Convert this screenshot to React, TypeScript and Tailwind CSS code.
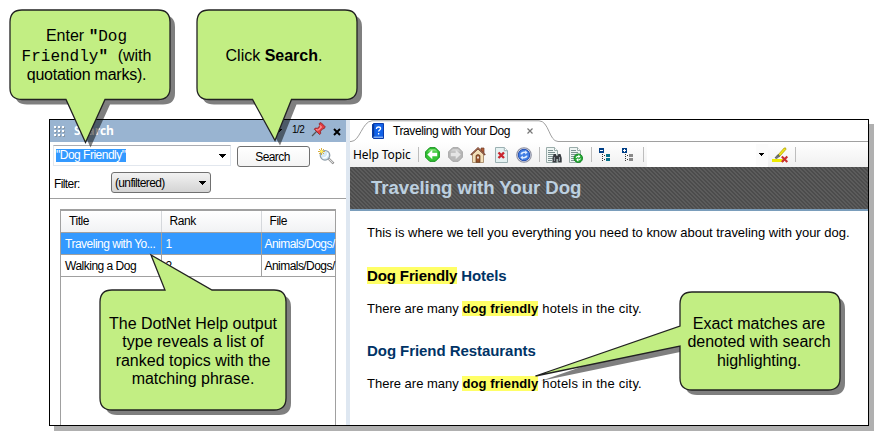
import React from "react";

const ui = "font-['Liberation_Sans',Arial,sans-serif]";

function Divider() {
  return <span className="h-[15px] w-px shrink-0 bg-[#bdbdbd]" />;
}

function Caret({ className = "" }: { className?: string }) {
  return (
    <svg className={className} width="7" height="4" viewBox="0 0 7 4" shapeRendering="crispEdges">
      <path d="M0 0h7v1H0zM1 1h5v1H1zM2 2h3v1H2zM3 3h1v1H3z" fill="#000" />
    </svg>
  );
}

function SmallCaret() {
  return (
    <svg width="5" height="3" viewBox="0 0 5 3" shapeRendering="crispEdges">
      <path d="M0 0h5v1H0zM1 1h3v1H1zM2 2h1v1H2z" fill="#000" />
    </svg>
  );
}

function PushPin() {
  return (
    <svg width="15" height="15" viewBox="0 0 15 15">
      <path d="M1 14 6 9" stroke="#555" strokeWidth="1.3" />
      <path d="M8.2 1.4 10 .6l4.2 4.2-1 1.8-1.4.2-2.3 2.4.2 2.4-1.2.9-5.2-5.2.9-1.2 2.3.2 2.2-2.4z" fill="#e23b40" stroke="#8f2930" strokeWidth=".9" />
      <path d="m8.7 3.3 1.7 1.6-3.1 3.2M5 7.5l2.2.8" stroke="#ff9d9b" strokeWidth="1.1" fill="none" />
    </svg>
  );
}

function MagnifierIcon() {
  return (
    <svg width="17" height="17" viewBox="0 0 17 17">
      <path d="m10.5 10.5 5 5" stroke="#777" strokeWidth="2.4" />
      <path d="m10.5 10.5 4.5 4.5" stroke="#e1e1e1" strokeWidth="1.1" />
      <circle cx="7" cy="7.3" r="4.8" fill="#d4e9f6" stroke="#8d9ca8" strokeWidth="1.2" />
      <path d="M4.5 9.7a4 4 0 0 0 5-5" fill="none" stroke="#fff" strokeWidth="1.2" />
      <path d="M3.5 0v7M0 3.5h7M1 1l5 5M6 1 1 6" stroke="#d4a72c" strokeWidth=".9" />
      <circle cx="3.5" cy="3.5" r="1.4" fill="#fff36b" />
    </svg>
  );
}

function BookIcon() {
  return (
    <svg width="12" height="16" viewBox="0 0 12 16">
      <path d="M1.5.5h10v15h-10l-1-1v-13z" fill="#1262e8" stroke="#0b3cad" />
      <path d="M1.5 1v14" stroke="#093894" strokeWidth="1.5" />
      <path d="M1.5 14.2H11" stroke="#b9d2f7" />
      <path d="M4.5 6V5.2Q4.6 4 6.6 4t2 1.6c0 1.3-2 1.4-2 3M6.6 10v1.5" fill="none" stroke="#fff" strokeWidth="1.3" />
    </svg>
  );
}

function ArrowCircle({ right = false }: { right?: boolean }) {
  return (
    <svg width="15" height="15" viewBox="0 0 15 15" className={right ? "-scale-x-100" : ""}>
      <path d="M4.700.7h5.600l4 4v5.600l-4 4H4.700l-4-4V4.700z" fill={right ? "#b9b9b9" : "#35c435"} stroke={right ? "#a2a2a2" : "#098c12"} />
      <path d="M5 2h5l2.700 2.500H2.500z" fill={right ? "#cfcfcf" : "#74dc6c"} />
      <path d="M2.300 7.500 7.300 2.800v2.900h4.900v3.600H7.300v2.900z" fill={right ? "#e5e5e5" : "#fff"} />
    </svg>
  );
}

function HomeIcon() {
  return (
    <svg width="16" height="16" viewBox="0 0 16 16">
      <path d="M11 1h3v5l-3-2z" fill="#b25c35" stroke="#70412b" strokeWidth=".7" />
      <path d="M2.5 7 8 2l5.5 5v8.5h-11z" fill="#f3dfb8" stroke="#9b7b58" strokeWidth=".8" />
      <path d="M.8 8 8 1.2 15.2 8" fill="none" stroke="#714030" strokeWidth="1.7" />
      <path d="M1.5 7.2 8 1l6.5 6.2" fill="none" stroke="#bd8060" strokeWidth=".6" />
      <path d="M6 15.3V8.5q2-2 4 0v6.8z" fill="#9e552b" stroke="#5c3820" strokeWidth=".7" />
      <path d="M7.2 9.5h1.6v2H7.2z" fill="#fff" />
    </svg>
  );
}

function StopIcon() {
  return (
    <svg width="13" height="16" viewBox="0 0 13 16">
      <path d="M.5.5h8.800l3.200 3.200v11.800H.5z" fill="#e4f1f1" stroke="#9bb0b2" />
      <path d="M9.3.5v3.2h3.2" fill="#fff" stroke="#9bb0b2" />
      <path d="m3.500 5.500 5.500 5.500m0-5.500-5.500 5.500" stroke="#c9262f" strokeWidth="2.4" />
    </svg>
  );
}

function RefreshIcon() {
  return (
    <svg width="16" height="16" viewBox="0 0 16 16">
      <circle cx="8" cy="8" r="7.3" fill="#d8dae6" stroke="#8f92a2" strokeWidth="1.1" />
      <circle cx="8" cy="8" r="5.7" fill="#3f7de4" stroke="#2450b4" />
      <path d="M4.4 7.2Q5 4.600 8.200 4.600h1V3.200L11.600 5.500 9.200 7.500V6.200Q7 5.800 6.200 7.500zM11.600 8.800Q11 11.400 7.800 11.400H6.800v1.400L4.400 10.500l2.400-2v1.300q2.400.4 3.200-1.300z" fill="#dcebff" />
    </svg>
  );
}

function DocumentSheet() {
  return (
    <>
      <path d="M.5.5h8l3 3v12H.5z" fill="#eef5f3" stroke="#9aacaa" />
      <path d="M8.5.5v3h3" fill="#fff" stroke="#9aacaa" />
      <path d="M2 3.5h5M2 5.5h7M2 7.5h7M2 9.5h5M2 11.5h5M2 13.5h4" stroke="#7c9292" />
    </>
  );
}

function FindIcon() {
  return (
    <svg width="16" height="16" viewBox="0 0 16 16">
      <DocumentSheet />
      <path d="M7.7 7h2.2l.8 2h.9l.8-2h2.1l1.2 4v4.5h-3.6V12h-1.5v3.5H6.5V11z" fill="#383c40" />
      <path d="M8.4 10v4M13.5 10v4" stroke="#929ca3" />
    </svg>
  );
}

function DocumentRefreshIcon() {
  return (
    <svg width="14" height="16" viewBox="0 0 14 16">
      <DocumentSheet />
      <circle cx="9.3" cy="11.2" r="4.3" fill="#25a935" stroke="#087d16" strokeWidth=".8" />
      <path d="M6.6 10.8q.5-2 2.8-2V7.5l2 2-2 1.7V10q-1.4 0-1.8 1M12 11.6q-.5 2-2.8 2v1.2l-2-2 2-1.7v1.3q1.4 0 1.8-1" fill="#fff" />
    </svg>
  );
}

function TreeIcon({ expand = false }: { expand?: boolean }) {
  return (
    <svg width="12" height="14" viewBox="0 0 12 14" shapeRendering="crispEdges">
      <path d="M0 0h5v5H0z" fill="#003e86" />
      <path d="M1 2h3v1H1z" fill="#fff" />
      {expand && <path d="M2 1h1v3H2z" fill="#fff" />}
      <path d="M3 6h1v1H3zm0 2h1v1H3zm0 2h1v1H3zm0 2h1v1H3zM5 7h1v1H5zm0 4h1v1H5z" fill="#333" />
      <path d="M7 6h4v3H7zm0 4h4v3H7z" fill={expand ? "#888" : "#087189"} />
    </svg>
  );
}

function HighlighterIcon() {
  return (
    <svg width="17" height="16" viewBox="0 0 17 16">
      <path d="m5.5 8.500 6.700-7.500q2-.8 1.700 1.400l-6.500 7.300z" fill="#f2e818" stroke="#ad9e10" strokeWidth=".8" />
      <path d="m3 10.800 3-3.300 1.700 1.600-3.100 2.500z" fill="#707477" stroke="#45484b" strokeWidth=".7" />
      <path d="M0 12h12v3H0z" fill="#eeec00" />
      <path d="m9.800 9.500 5.500 5.500m0-5.500L9.800 15" stroke="#c92d31" strokeWidth="2.1" />
    </svg>
  );
}

function SearchPanel() {
  return (
    <aside className="flex w-[296px] shrink-0 flex-col bg-white text-[12px] tracking-[-0.5px]">
      <header className="flex h-[22px] items-center bg-[#99b4d1]">
        <svg className="ml-1 mt-px" width="12" height="12" viewBox="0 0 12 12">
          {[0, 4, 8].map((y) =>
            [0, 4, 8].map((x) => (
              <g key={`${x}-${y}`}>
                <rect x={x + 1} y={y + 1} width="2" height="2" fill="#8a99a8" />
                <rect x={x} y={y} width="2" height="2" fill="#fff" />
              </g>
            )),
          )}
        </svg>
        <span className="ml-[8px] font-['Open_Sans',sans-serif] text-[12px] font-bold leading-[20px] tracking-[-0.1px] text-white">Search</span>
        <Caret className="ml-auto" />
        <span className="ml-[10px] w-[13px] pb-[3px] text-[10px] leading-[12px] tracking-[-0.6px]">1/2</span>
        <span className="mb-[3px] ml-[6px]"><PushPin /></span>
        <svg className="ml-[7px] mr-[5px] mt-px" width="8" height="8" viewBox="0 0 8 8">
          <path d="m1 1 6 6m0-6L1 7" stroke="#000" strokeWidth="2" />
        </svg>
      </header>
      <div className="flex h-[28px] items-start pl-[3px] pt-[3px]">
        <div className="flex h-[21px] w-[178px] items-center justify-between border border-[#e2e7ee] border-t-[#abadb3] pl-[2px] pr-[4px]">
          <span className="h-[13px] w-[70px] whitespace-nowrap bg-[#3399ff] leading-[13px] text-white">"Dog Friendly"</span>
          <Caret />
        </div>
        <button className="ml-[6px] mt-px flex h-[21px] w-[73px] items-center justify-center rounded-[3px] border border-[#707070] bg-gradient-to-b from-white to-[#f4f4f4] pr-[2px] tracking-[-0.6px]">Search</button>
        <span className="ml-[8px] mt-[3px]"><MagnifierIcon /></span>
      </div>
      <div className="flex h-[28px] items-start pl-[4px] pt-[2px]">
        <span className="w-[57px] pt-[5px] leading-[14px] tracking-[-0.6px]">Filter:</span>
        <div className="flex h-[21px] w-[100px] items-center justify-between rounded-[3px] border border-[#707070] bg-gradient-to-b from-[#f2f2f2] to-[#d4d4d4] pl-[3px] pr-[4px]">
          <span className="tracking-[-0.65px]">(unfiltered)</span>
          <Caret />
        </div>
      </div>
      <div className="h-px bg-[#a0a0a0]" />
      <div className="ml-[10px] mt-[10px] min-h-0 w-[276px] flex-1 border-x border-t-2 border-[#a0a0a0]">
        <table className="w-full table-fixed border-collapse text-left">
          <colgroup>
            <col className="w-[100px]" /><col className="w-[100px]" /><col className="w-[74px]" />
          </colgroup>
          <thead>
            <tr className="h-[21px] bg-gradient-to-b from-white to-[#f1f2f4]">
              {["Title", "Rank", "File"].map((h) => (
                <th key={h} className="border-b border-r border-[#a0a0a0] py-0 pl-[8px] pt-px font-normal leading-[19px] tracking-[-0.45px] last:border-r-0 [&:not(:last-child)]:border-r-[#d5d8dc]">{h}</th>
              ))}
            </tr>
          </thead>
          <tbody>
            {[
              ["Traveling with Yo...", "1"],
              ["Walking a Dog", "2"],
            ].map(([title, rank], i) => (
              <tr key={title} className={i === 0 ? "h-[22px] bg-[#3399ff] text-white" : "h-[22px]"}>
                {[title, rank, "Animals/Dogs/"].map((v, j) => (
                  <td key={j} className="whitespace-nowrap border-b border-r border-[#a0a0a0] py-0 pl-[4px] pt-px leading-[20px] last:border-r-0 last:pl-[3px] last:tracking-[-0.55px]">{v}</td>
                ))}
              </tr>
            ))}
          </tbody>
        </table>
      </div>
    </aside>
  );
}

function TabStrip() {
  return (
    <div className="grid h-[22px]">
      <svg className="col-start-1 row-start-1" width="518" height="22" viewBox="0 0 518 22">
        <path d="M0 21.5H1C10 21.5 12 1.5 22 .8H189C199 .8 199 21.5 208 21.5H518" fill="#fff" stroke="#a0a0a0" />
      </svg>
      <div className="col-start-1 row-start-1 flex items-center pl-[22px]">
        <BookIcon />
        <span className="ml-[9px] w-[117px] whitespace-nowrap text-[12px] tracking-[-0.4px]">Traveling with Your Dog</span>
        <svg className="ml-[17px]" width="6" height="6" viewBox="0 0 6 6">
          <path d="m.5.5 5 5m0-5-5 5" stroke="#777" strokeWidth="1.2" />
        </svg>
      </div>
    </div>
  );
}

function Toolbar() {
  return (
    <div className="flex h-[25px] items-center bg-gradient-to-b from-white to-[#f0f0f0] pl-[3px]">
      <span className="w-[65px] whitespace-nowrap font-['Noto_Sans',sans-serif] text-[12px] leading-[20px] tracking-[-0.1px]">Help Topic</span>
      <Divider />
      <span className="ml-[6px]"><ArrowCircle /></span>
      <span className="ml-[8px]"><ArrowCircle right /></span>
      <span className="ml-[7px]"><HomeIcon /></span>
      <span className="ml-[9px]"><StopIcon /></span>
      <span className="ml-[8px] mr-[7px]"><RefreshIcon /></span>
      <Divider />
      <span className="ml-[6px]"><FindIcon /></span>
      <span className="ml-[7px] mr-[8px]"><DocumentRefreshIcon /></span>
      <Divider />
      <span className="ml-[7px]"><TreeIcon /></span>
      <span className="ml-[11px] mr-[9px]"><TreeIcon expand /></span>
      <Divider />
      <div className="ml-[3px] flex h-[24px] w-[121px] items-center justify-end bg-white">
        <div className="flex h-[22px] w-[12px] items-center justify-center bg-[#fbfbfb] pr-[2px]">
          <SmallCaret />
        </div>
      </div>
      <span className="ml-[4px] mr-[6px]"><HighlighterIcon /></span>
      <Divider />
    </div>
  );
}

function Mark({ children }: { children: React.ReactNode }) {
  return <mark className="bg-[#ffff66] font-bold text-black">{children}</mark>;
}

function HotelSentence() {
  return (
    <p className="mt-[16px]">
      There are many <span className="tracking-[0.14px]"><Mark>dog friendly</Mark></span>
      <span className="tracking-[0.2px]"> hotels in the city.</span>
    </p>
  );
}

function Topic() {
  return (
    <article className="whitespace-nowrap pl-[17px] text-[13px] leading-[16px]">
      <p className="mt-[14px] tracking-[-0.02px]">This is where we tell you everything you need to know about traveling with your dog.</p>
      <h3 className="mt-[25px] text-[15px] font-bold leading-[19px] tracking-[-0.12px] text-[#003366]"><Mark>Dog Friendly</Mark> Hotels</h3>
      <HotelSentence />
      <h3 className="mt-[24px] text-[15px] font-bold leading-[19px] tracking-[-0.06px] text-[#003366]">Dog Friend Restaurants</h3>
      <HotelSentence />
    </article>
  );
}

function HelpViewer() {
  return (
    <main className="flex min-w-0 flex-1 flex-col bg-white">
      <TabStrip />
      <Toolbar />
      <div className="flex h-[44px] items-center border-b-2 border-[#7a9dbb] bg-[#545454] bg-[linear-gradient(45deg,#4c4c4c_25%,#5c5c5c_25%,#5c5c5c_50%,#4c4c4c_50%,#4c4c4c_75%,#5c5c5c_75%)] bg-[size:4px_4px] pl-[21px]">
        <h1 className="whitespace-nowrap text-[18.67px] font-bold leading-[22px] tracking-[-0.06px] text-[#bcd0e0]">Traveling with Your Dog</h1>
      </div>
      <Topic />
    </main>
  );
}

const bubbles = [
  "M22 10H158Q170 10 170 22V88Q170 99.5 158 99.5H105L85.500 142.500 66 99.500H22Q10 99.500 10 88V22Q10 10 22 10Z",
  "M209 10H345Q357 10 357 22V88Q357 99.500 345 99.500H291.500L275 140.500 252.500 99.500H209Q197 99.500 197 88V22Q197 10 209 10Z",
  "M112 290H165L151 255 212 290H274Q286 290 286 302V398Q286 410 274 410H112Q100 410 100 398V302Q100 290 112 290Z",
  "M692 292H828Q840 292 840 304V378Q840 390 828 390H692Q680 390 680 378V346L535.500 376 680 326V304Q680 292 692 292Z",
];

function Callouts() {
  return (
    <div className="absolute inset-0 text-center text-[16px] leading-[18.5px]">
      <svg className="absolute inset-0" width="874" height="431" viewBox="0 0 874 431">
        {bubbles.map((d) => (
          <g key={d}>
            <path d={d} transform="translate(5 5)" fill="#000" fillOpacity=".5" />
            <path d={d} fill="#c2ee83" stroke="#222" strokeWidth="1.3" />
          </g>
        ))}
      </svg>
      <div className="absolute left-[10px] top-[10px] flex h-[90px] w-[160px] items-center justify-center whitespace-nowrap pr-[7px]">
        <p className="pt-[2px]">
          Enter <span className="font-['Liberation_Mono',monospace]"><b>"</b>Dog</span><br />
          <span className="font-['Liberation_Mono',monospace]">Friendly<b>"</b> </span>(with<br />
          <span className="tracking-[-0.25px]">quotation marks).</span>
        </p>
      </div>
      <div className="absolute left-[197px] top-[10px] flex h-[90px] w-[160px] items-center justify-center whitespace-nowrap pr-[6px] pt-[2px]">
        <p>Click <b>Search</b>.</p>
      </div>
      <div className="absolute left-[100px] top-[290px] flex h-[120px] w-[186px] items-center justify-center whitespace-nowrap pt-[3px]">
        <p>The DotNet Help output<br />type reveals a list of<br />ranked topics with the<br />matching phrase.</p>
      </div>
      <div className="absolute left-[680px] top-[292px] flex h-[98px] w-[160px] items-center justify-center whitespace-nowrap pr-[2px] pt-[3px]">
        <p>Exact matches are<br />denoted with search<br /><span className="tracking-[-0.1px]">highlighting.</span></p>
      </div>
    </div>
  );
}

export default function App() {
  return (
    <div className={`${ui} relative h-[431px] w-[874px] overflow-hidden bg-white pl-[49px] pt-[119px] text-black`}>
      <div className="flex h-[307px] w-[820px] border border-black bg-white shadow-[5px_5px_0_0_#b0b0b0]">
        <SearchPanel />
        <div className="w-[4px] shrink-0 bg-[#dee7f1]" />
        <HelpViewer />
      </div>
      <Callouts />
    </div>
  );
}
